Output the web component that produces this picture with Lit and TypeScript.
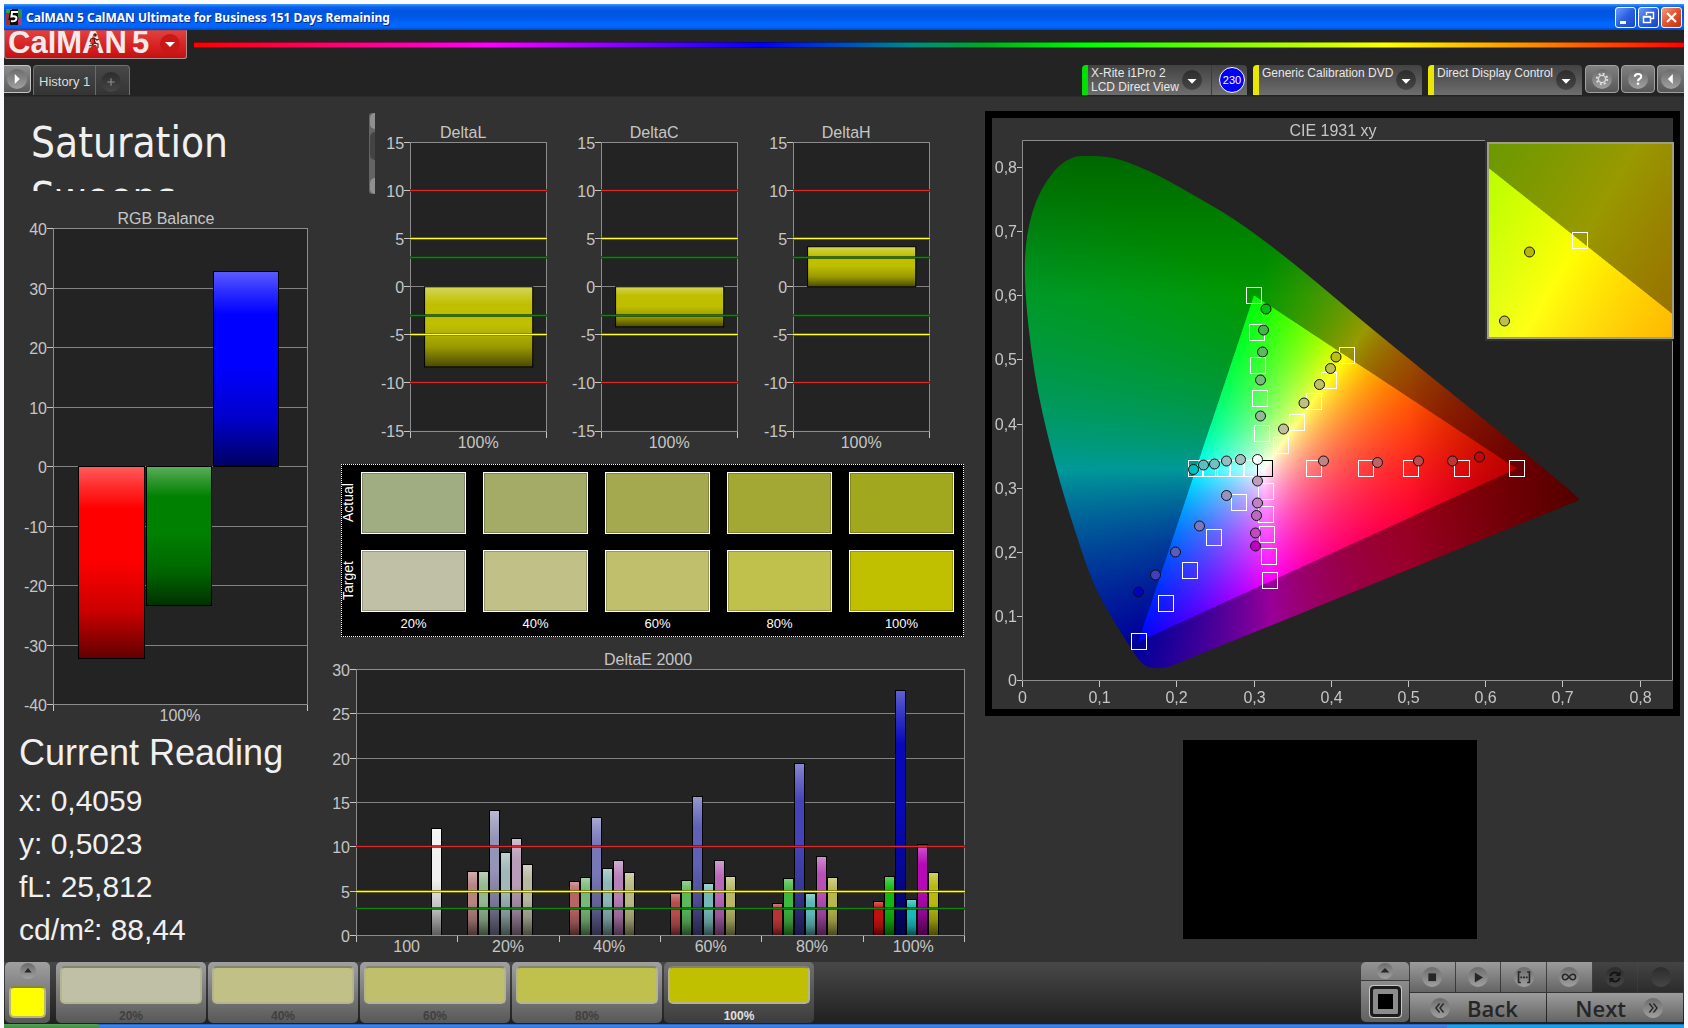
import { LitElement, html, svg, css } from "lit";
import { customElement, property } from "lit/decorators.js";
import { classMap } from "lit/directives/class-map.js";

type Rgb = [number, number, number];
type Point = [number, number];

const mix = (a: Rgb, b: Rgb, t: number): string =>
  `rgb(${a.map((v, i) => Math.round(v + (b[i] - v) * t)).join(",")})`;
const hex = (h: string): Rgb =>
  [1, 3, 5].map((i) => parseInt(h.slice(i, i + 2), 16)) as Rgb;

interface Bar {
  x: number;
  w: number;
  value: number;
  color: string;
}

interface ChartSpec {
  title: string;
  width: number;
  height: number;
  titleX: number;
  plot: { x: number; y: number; w: number; h: number };
  min: number;
  max: number;
  step: number;
  grid: number[];
  limits?: boolean;
  signedLimits?: boolean;
  categories: string[];
  bars: Bar[];
}

@customElement("bar-chart")
class BarChart extends LitElement {
  @property({ attribute: false }) spec!: ChartSpec;

  static styles = css`
    :host { display: block; min-width: 0; }
    svg { display: block; width: 100%; height: auto; overflow: visible; }
    text { font: 16px "Liberation Sans", Arial, sans-serif; fill: #c6c6c6; }
    .end { text-anchor: end; }
    .mid { text-anchor: middle; }
    .plot { fill: #232323; }
    .frame { fill: none; stroke: #8c8c8c; stroke-width: 1; shape-rendering: crispEdges; }
    .grid { stroke: #828282; stroke-width: 1; shape-rendering: crispEdges; }
    .tick { stroke: #c6c6c6; stroke-width: 1; shape-rendering: crispEdges; }
    .bar { stroke: #000; stroke-width: 1; }
    .halo { stroke-width: 3; stroke-opacity: 0.75; }
    .line { stroke-width: 1; }
    .halo, .line { shape-rendering: crispEdges; }
  `;

  render() {
    const s = this.spec;
    const { x, y, w, h } = s.plot;
    const toY = (v: number) => Math.round(y + ((s.max - v) / (s.max - s.min)) * h) + 0.5;
    const ticks: number[] = [];
    for (let v = s.min; v <= s.max; v += s.step) ticks.push(v);
    const colors = [...new Set(s.bars.map((b) => b.color))];
    const catW = w / s.categories.length;
    const limits: [number, string, string][] = s.limits
      ? [[10, "#e02828", "#701212"], [5, "#ffff20", "#7c7c00"], [3, "#148014", "#0c4a0c"]]
      : [];
    const allLimits = limits.flatMap(([v, c, d]) =>
      s.signedLimits ? [[v, c, d], [-v, c, d]] : [[v, c, d]]) as [number, string, string][];
    return html`<svg viewBox="0 0 ${s.width} ${s.height}" role="img" aria-label=${s.title}>
      <defs>
        ${colors.map((c, i) => svg`<linearGradient id="g${i}" x1="0" y1="0" x2="0" y2="1">
          <stop offset="0" stop-color=${mix(hex(c), [255, 255, 255], 0.36)}></stop>
          <stop offset="0.1" stop-color=${mix(hex(c), [255, 255, 255], 0.18)}></stop>
          <stop offset="0.22" stop-color=${c}></stop>
          <stop offset="0.48" stop-color=${c}></stop>
          <stop offset="0.75" stop-color=${mix(hex(c), [0, 0, 0], 0.2)}></stop>
          <stop offset="1" stop-color=${mix(hex(c), [0, 0, 0], 0.62)}></stop>
        </linearGradient>`)}
      </defs>
      <text class="mid" x=${s.titleX} y=${y - 4}>${s.title}</text>
      <rect class="plot" x=${x} y=${y} width=${w} height=${h}></rect>
      ${s.grid.map((v) => svg`<line class="grid" x1=${x} x2=${x + w} y1=${toY(v)} y2=${toY(v)}></line>`)}
      ${s.bars.map((b) => {
        const top = toY(Math.max(b.value, 0));
        const bottom = toY(Math.min(b.value, 0));
        return svg`<rect class="bar" x=${x + b.x + 0.5} y=${top} width=${b.w - 1} height=${bottom - top}
          fill="url(#g${colors.indexOf(b.color)})"></rect>`;
      })}
      <rect class="frame" x=${x + 0.5} y=${toY(s.max)} width=${w} height=${toY(s.min) - toY(s.max)}></rect>
      ${allLimits.map(([v, c, d]) => svg`
        <line class="halo" x1=${x} x2=${x + w + 1} y1=${toY(v)} y2=${toY(v)} stroke=${d}></line>
        <line class="line" x1=${x} x2=${x + w + 1} y1=${toY(v)} y2=${toY(v)} stroke=${c}></line>`)}
      ${ticks.map((v) => svg`
        <line class="tick" x1=${x - 6} x2=${x} y1=${toY(v)} y2=${toY(v)}></line>
        <text class="end" x=${x - 6} y=${toY(v) + 6}>${v}</text>`)}
      ${[...s.categories, ""].map((_, i) => svg`<line class="tick"
        x1=${Math.round(x + catW * i) + 0.5} x2=${Math.round(x + catW * i) + 0.5}
        y1=${y + h + 1} y2=${y + h + 7}></line>`)}
      ${s.categories.map((c, i) => svg`<text class="mid" x=${x + catW * (i + 0.5)} y=${y + h + 17}>${c}</text>`)}
    </svg>`;
  }
}

const RGB_BALANCE: ChartSpec = {
  title: "RGB Balance", width: 333, height: 530, titleX: 162,
  plot: { x: 49, y: 28, w: 254, h: 476 },
  min: -40, max: 40, step: 10, grid: [-30, -20, -10, 0, 10, 20, 30],
  categories: ["100%"],
  bars: [
    { x: 25, w: 67, value: -32.3, color: "#ff0000" },
    { x: 93, w: 66, value: -23.3, color: "#008000" },
    { x: 160, w: 66, value: 32.8, color: "#0000ff" },
  ],
};

const delta = (title: string, value: number): ChartSpec => ({
  title, width: 191, height: 345, titleX: 88,
  plot: { x: 35, y: 30, w: 136, h: 288 },
  min: -15, max: 15, step: 5, grid: [0], limits: true, signedLimits: true,
  categories: ["100%"],
  bars: [{ x: 14, w: 109, value, color: "#bfbf00" }],
});

const SERIES: { at: number; values: number[]; colors: string[] }[] = [
  { at: 75, values: [12.1], colors: ["#f0f0f0"] },
  { at: 111, values: [7.2, 7.2, 14.1, 9.4, 10.9, 8], colors: ["#b88482", "#94b892", "#9494b8", "#a0b8b8", "#b89cb8", "#b8b8a0"] },
  { at: 213, values: [6.1, 6.5, 13.3, 7.6, 8.5, 7.1], colors: ["#b86464", "#78b878", "#7878b8", "#8cb8b8", "#b880b8", "#b8b880"] },
  { at: 314, values: [4.7, 6.2, 15.7, 5.9, 8.5, 6.7], colors: ["#b84c4c", "#5cb85c", "#6060b8", "#74b8b8", "#b868b8", "#b8b868"] },
  { at: 416, values: [3.6, 6.4, 19.4, 4.7, 8.9, 6.5], colors: ["#b83434", "#40b840", "#4444b8", "#5cb8b8", "#b850b8", "#b8b850"] },
  { at: 517, values: [3.8, 6.7, 27.6, 4.1, 10.3, 7.1], colors: ["#c01010", "#10b810", "#0808b8", "#18b8b8", "#b808b8", "#b8b810"] },
];

const DELTA_E: ChartSpec = {
  title: "DeltaE 2000", width: 641, height: 322, titleX: 311,
  plot: { x: 19, y: 29, w: 608, h: 266 },
  min: 0, max: 30, step: 5, grid: [5, 10, 15, 20, 25], limits: true,
  categories: ["100", "20%", "40%", "60%", "80%", "100%"],
  bars: SERIES.flatMap((g) =>
    g.values.map((value, i) => ({ x: g.at + i * 11, w: 11, value, color: g.colors[i] }))),
};

// Chart space: the CIE panel's drawing units, with the xy origin at (1022.4, 680.3).
const VIEW = { x: 985, y: 111, w: 695, h: 605 };
const ORIGIN = { x: 1022.4, y: 680.3 };
const SCALE = { x: 772, y: 641.6 };
const INSET = { x: 1488, y: 143, w: 185, h: 195, scale: 3860, markX: 1580, markY: 240.5 };

const LOCUS: Point[] = [
  [1088, 156], [1099, 156], [1115, 158], [1133, 164], [1160, 176], [1197, 197], [1233, 218], [1273, 247],
  [1314, 280], [1360, 319], [1420, 368], [1480, 416], [1530, 457], [1567, 488], [1578, 498], [1580, 500],
  [1577, 501], [1520, 524], [1400, 573], [1280, 622], [1178, 663], [1172, 666], [1161, 668.5], [1149, 668], [1140, 662],
  [1131, 648], [1111, 617], [1092, 582], [1074, 528], [1060, 483], [1047, 433], [1038, 393], [1031, 350],
  [1026, 303], [1024.5, 270], [1025.5, 246], [1029, 224], [1036, 200], [1047, 180], [1060, 164], [1075, 156],
];

const TARGETS: Point[] = [
  [1254, 295], [1257, 332], [1258, 365], [1260, 398], [1262, 433],
  [1347, 355], [1329, 380], [1314, 401], [1297, 422], [1281, 445],
  [1314, 468], [1366, 468], [1411, 468], [1462, 468], [1517, 468],
  [1196, 468], [1210, 468], [1223, 468], [1237, 468], [1251, 468],
  [1266, 491], [1266, 514], [1267, 534], [1269, 556], [1270, 580],
  [1239, 502], [1214, 537], [1190, 570], [1166, 603], [1139, 641],
];

const READINGS: [number, number, string][] = [
  [1266, 309, "#00c010"], [1263.5, 330, "#40b848"], [1262.5, 352, "#5cb860"], [1260.5, 380, "#78b87c"], [1260.5, 416, "#94b896"],
  [1336, 357, "#bfbf10"], [1330.5, 368.5, "#bfbf4c"], [1319.5, 384.5, "#bfbf68"], [1304, 403, "#bfbf84"], [1283.5, 429, "#bfbf9c"],
  [1323.5, 461, "#bf8484"], [1377.5, 462.5, "#bf6464"], [1418.5, 461, "#bf4c4c"], [1452.5, 461, "#bf3434"], [1479.5, 457, "#bf0808"],
  [1193.5, 469.5, "#00bfbf"], [1203.5, 465, "#5cbfbf"], [1214.5, 464, "#74bfbf"], [1226.5, 461, "#90bfbf"], [1240.5, 459.5, "#a4bfbf"],
  [1257.5, 481, "#bf9cbf"], [1257.5, 503, "#bf84bf"], [1256.5, 515.5, "#bf68bf"], [1255.5, 533, "#bf4cbf"], [1255.5, 546, "#bf00bf"],
  [1226.5, 495.5, "#9494bf"], [1199.5, 526, "#7878bf"], [1175.5, 552, "#5c5cbf"], [1155.5, 575, "#4040bf"], [1138.5, 592, "#0000bf"],
  [1257.5, 459.5, "#ffffff"],
];

function chromaticity(x: number, y: number): Rgb {
  const yy = Math.max(y, 0.0005);
  const X = x / yy;
  const Z = (1 - x - yy) / yy;
  const r = 3.2406 * X - 1.5372 - 0.4986 * Z;
  const g = -0.9689 * X + 1.8758 + 0.0415 * Z;
  const b = 0.0557 * X - 0.204 + 1.057 * Z;
  const outside = Math.min(r, g, b) < 0;
  const c = [r, g, b].map((v) => Math.max(v, 0));
  const top = Math.max(...c);
  const falloff = 1 - Math.max(0, x - 0.5) * 2.1 - Math.max(0, y - 0.6) * 1.5;
  const k = (outside ? 0.6 : 1) * falloff;
  return c.map((v) => (v / top) * 255 * k) as Rgb;
}

function paint(w: number, h: number, toXy: (px: number, py: number) => Point): HTMLCanvasElement {
  const canvas = document.createElement("canvas");
  canvas.width = w * 2;
  canvas.height = h * 2;
  const ctx = canvas.getContext("2d")!;
  const image = ctx.createImageData(canvas.width, canvas.height);
  for (let j = 0, o = 0; j < canvas.height; j++) {
    for (let i = 0; i < canvas.width; i++, o += 4) {
      const [x, y] = toXy((i + 0.5) / 2, (j + 0.5) / 2);
      const [r, g, b] = chromaticity(x, y);
      image.data[o] = r;
      image.data[o + 1] = g;
      image.data[o + 2] = b;
      image.data[o + 3] = 255;
    }
  }
  ctx.putImageData(image, 0, 0);
  return canvas;
}

@customElement("cie-chart")
class CieChart extends LitElement {
  static styles = css`
    :host { display: block; position: relative; background: #323232; }
    canvas, svg { display: block; width: 100%; height: auto; }
    svg { position: absolute; inset: 0; }
    text { font: 16px "Liberation Sans", Arial, sans-serif; fill: #c6c6c6; }
    .end { text-anchor: end; }
    .mid { text-anchor: middle; }
    .border { fill: none; stroke: #000; stroke-width: 7; }
    .frame { fill: none; stroke: #8c8c8c; stroke-width: 1; }
    .inset { fill: none; stroke: #a0a080; stroke-width: 2; }
    .tick { stroke: #c6c6c6; stroke-width: 1; shape-rendering: crispEdges; }
    .target { fill: none; stroke: #fff; stroke-width: 1; }
    .white { stroke: #000; }
    .reading { stroke: #101010; stroke-width: 1; }
  `;

  firstUpdated() {
    const canvas = this.renderRoot.querySelector("canvas")!;
    const ctx = canvas.getContext("2d")!;
    ctx.translate(-VIEW.x, -VIEW.y);
    ctx.fillStyle = "#232323";
    ctx.fillRect(1023, 141, 650, 539);
    ctx.save();
    ctx.beginPath();
    const n = LOCUS.length;
    const mid = (a: Point, b: Point): Point => [(a[0] + b[0]) / 2, (a[1] + b[1]) / 2];
    ctx.moveTo(...mid(LOCUS[n - 1], LOCUS[0]));
    LOCUS.forEach((p, i) => ctx.quadraticCurveTo(...p, ...mid(p, LOCUS[(i + 1) % n])));
    ctx.clip();
    const field = paint(560, 516, (px, py) => [
      (1022 + px - ORIGIN.x) / SCALE.x,
      (ORIGIN.y - 154 - py) / SCALE.y,
    ]);
    ctx.drawImage(field, 1022, 154, 560, 516);
    ctx.restore();
    ctx.fillStyle = "#323232";
    ctx.fillRect(1485, 139, 191, 202);
    const zoom = paint(INSET.w, INSET.h, (px, py) => [
      0.4193 + (INSET.x + px - INSET.markX) / INSET.scale,
      0.5053 - (INSET.y + py - INSET.markY) / INSET.scale,
    ]);
    ctx.drawImage(zoom, INSET.x, INSET.y, INSET.w, INSET.h);
  }

  render() {
    const steps = [0, 1, 2, 3, 4, 5, 6, 7, 8];
    const label = (i: number) => (i === 0 ? "0" : `0,${i}`);
    return html`<canvas width=${VIEW.w} height=${VIEW.h}></canvas>
      <svg viewBox="${VIEW.x} ${VIEW.y} ${VIEW.w} ${VIEW.h}" role="img" aria-label="CIE 1931 xy">
        <rect class="border" x="988.5" y="114.5" width="688" height="598"></rect>
        <text class="mid" x="1333" y="136">CIE 1931 xy</text>
        <path class="frame" d="M1485 140.5H1022.5V680.5H1672.5V341"></path>
        <rect class="inset" x="1488" y="143" width="185" height="195"></rect>
        ${steps.map((i) => {
          const x = Math.floor(ORIGIN.x + i * 0.1 * SCALE.x) + 0.5;
          const y = Math.round(ORIGIN.y - i * 0.1 * SCALE.y) + 0.5;
          return svg`<line class="tick" x1=${x} x2=${x} y1="681" y2="687"></line>
            <line class="tick" x1="1017" x2="1022" y1=${y} y2=${y}></line>
            <text class="mid" x=${x} y="703">${label(i)}</text>
            <text class="end" x="1017" y=${y + 5}>${label(i)}</text>`;
        })}
        ${TARGETS.map(([x, y]) => svg`<rect class="target" x=${x - 7.5} y=${y - 7.5} width="15" height="16"></rect>`)}
        <rect class="target white" x="1257.5" y="460.5" width="15" height="16"></rect>
        ${READINGS.map(([x, y, c]) => svg`<circle class="reading" cx=${x} cy=${y} r="5" fill=${c}></circle>`)}
        <rect class="target" x="1572.5" y="232.5" width="15" height="16"></rect>
        <circle class="reading" cx="1529.5" cy="252" r="5" fill="#b8b800"></circle>
        <circle class="reading" cx="1504.5" cy="321" r="5" fill="#bfbf4c"></circle>
      </svg>`;
  }
}

const LEVELS = ["20%", "40%", "60%", "80%", "100%"];
const ACTUAL = ["#a0ac82", "#a4ab66", "#a4a84e", "#a3a834", "#a2a81e"];
const TARGET = ["#c0c0a6", "#c0c087", "#c0c06c", "#c0c04c", "#c0c000"];

const disc = (glyph: unknown, dark = false) => svg`<svg class="disc" viewBox="0 0 22 22" aria-hidden="true">
  <defs><linearGradient id=${dark ? "disc-dark" : "disc-light"} x1="0" y1="0" x2="0" y2="1">
    <stop offset="0" stop-color=${dark ? "#2c2c2c" : "#6c6c6c"}></stop>
    <stop offset="1" stop-color=${dark ? "#464646" : "#a0a0a0"}></stop>
  </linearGradient></defs>
  <circle cx="11" cy="11" r="11" fill=${dark ? "url(#disc-dark)" : "url(#disc-light)"}></circle>${glyph}</svg>`;

const DOWN = svg`<path d="M6 10h10l-5 5z" fill="#fff"></path>`;
const TOOLS: [string, unknown, boolean][] = [
  ["Stop", svg`<rect x="7" y="7" width="8.500" height="8.500" fill="#262626"></rect>`, false],
  ["Play", svg`<path d="M7.500 6l9 5.500-9 5.500z" fill="#262626"></path>`, false],
  ["Read series", svg`<path d="M7.500 5.500H5v11.500h2.500M14.500 5.500H17v11.500h-2.500" fill="none" stroke="#262626" stroke-width="1.800"></path><path d="M7 10.500h2v2H7zM10 10.500h2v2h-2zM13 10.500h2v2h-2z" fill="#262626"></path>`, false],
  ["Read continuous", svg`<path d="M11 11C9.500 9 8.500 8 6.800 8a3 3 0 0 0 0 6C8.500 14 9.500 13 11 11s2.500-3 4.200-3a3 3 0 0 1 0 6c-1.700 0-2.700-1-4.200-3z" fill="none" stroke="#262626" stroke-width="1.700"></path>`, false],
  ["Refresh", svg`<path d="M6 10a5 5 0 0 1 8.500-2.500M16 12a5 5 0 0 1-8.500 2.500" fill="none" stroke="#141414" stroke-width="2.200"></path><path d="M17 4.500v5.500h-5.500zM5 17.500v-5.500h5.500z" fill="#141414"></path>`, true],
  ["Record", svg``, true],
];

@customElement("app-root")
class AppRoot extends LitElement {
  static styles = css`
    :host { display: block; min-height: 100vh; background: #fbfbff; box-sizing: border-box; padding: 4px 4px 0;
      font: 12px "Liberation Sans", Arial, sans-serif; color: #e8e8e8; overflow: hidden; }
    * { box-sizing: border-box; }
    button { font: inherit; color: inherit; border: 0; margin: 0; padding: 0; background: none; display: flex; align-items: center; }
    h1, h2, p { margin: 0; font-weight: normal; }
    .disc { width: 20px; height: 20px; display: block; flex: none; }

    .titlebar { display: flex; align-items: center; height: 26px; padding: 0 2px; gap: 4px;
      background: linear-gradient(#3f96ff 0, #0a62ee 3px, #0055e0 7px, #0058e8 14px, #0066ff 19px, #0066fb 23px, #0046c8 26px); }
    .appicon { width: 16px; height: 16px; }
    .caption { font: bold 12px "Noto Sans", "Open Sans", sans-serif; color: #fff; text-shadow: 1px 1px 0 #0a2a88; flex: 1; }
    .winbtns { display: flex; gap: 2px; }
    .winbtn { width: 21px; height: 21px; border: 1px solid #fff; border-radius: 3px; justify-content: center;
      background: linear-gradient(135deg, #6d9cf8, #2a5fe0 50%, #1c48c0); }
    .winbtn.close { background: linear-gradient(135deg, #f0a080, #e0502c 50%, #c03414); }
    .winbtn svg { width: 17px; height: 17px; }

    .brand { display: flex; align-items: flex-start; background: #232323; gap: 7px; height: 35px; }
    .logo { width: 183px; height: 29px; background: linear-gradient(#e04040, #d82424 50%, #c41010);
      border: 1px solid #a89090; border-top: 1px solid #b84040; border-radius: 0 0 3px 3px; }
    .logo svg { width: 181px; height: 27px; display: block; }
    .mark { font: bold 31px "Liberation Sans", Arial, sans-serif; fill: #f0eaea; }
    .rainbow { flex: 1; height: 6px; margin-top: 12px; border-top: 1px solid #0006; border-bottom: 1px solid #0006;
      background: linear-gradient(90deg, #f00, #f0a 14%, #f0f 20%, #50f 32%, #00f 38%, #088 48%, #0a2 53%, #0f0 60%, #8f0 70%, #ff0 80%, #f80 90%, #f00); }

    .tabs { display: flex; align-items: flex-start; background: #232323; height: 31px; }
    .toggle { width: 27px; height: 28px; border: 1px solid #c4c4c4; border-left: 0; border-radius: 0 4px 4px 0;
      background: linear-gradient(#8c8c8c, #5c5c5c); padding-left: 3px; margin-right: 2px; }
    .history { display: flex; height: 30px; border: 1px solid #707070; border-bottom: 0; border-radius: 4px 4px 0 0;
      background: linear-gradient(#484848, #343434); font-size: 13px; color: #dcdcdc; }
    .history button { padding: 2px 5px 0; }
    .history .add { border-left: 1px solid #6c6c6c; width: 34px; }
    .spacer { flex: 1; }
    .device { display: flex; height: 30px; border-radius: 4px 4px 0 0; background: linear-gradient(#424242, #6e6e6e);
      border-left: 6px solid #00e000; margin-right: 6px; }
    .device.yellow { border-left-color: #e8e800; }
    .device .pick { align-items: center; padding: 0 6px 0 3px; text-align: left; line-height: 14px; justify-content: space-between; }
    .device .names { align-self: flex-start; padding-top: 1px; white-space: nowrap; }
    .meter { width: 165px; } .meter .pick { width: 124px; border-right: 1px solid #3c3c3c; padding-right: 9px; }
    .source { width: 169px; } .source .pick { width: 100%; }
    .display { width: 154px; margin-right: 3px; } .display .pick { width: 100%; }
    .count { width: 26px; height: 26px; margin: 2px 0 0 7px; border: 1px solid #fff; border-radius: 50%; background: #0000f8; color: #fff;
      line-height: 24px; text-align: center; font-size: 11px; }
    .square { width: 34px; height: 28px; border: 1px solid #a0a0a0; border-radius: 4px; margin-right: 2px; justify-content: center;
      background: linear-gradient(#808080, #585858); }
    .square.last { width: 27px; margin-right: 0; border-right: 0; border-radius: 4px 0 0 4px; justify-content: flex-start; padding-left: 3px; }

    .work { display: grid; grid-template-columns: 333fr 641fr 706fr; align-items: start; background: #323232; min-height: 866px;
      border-top: 1px solid #2b2b2b; }
    .title { font: 42px/55px "DejaVu Sans Condensed", "DejaVu Sans", sans-serif; color: #f0f0f0; padding: 18px 28px 0 27px; height: 94px;
      overflow: hidden; margin-bottom: 9px; }
    .reading { padding: 1px 0 0 15px; color: #f0f0f0; }
    .reading h2 { font-size: 36px; line-height: 44px; margin-bottom: 4px; }
    .reading p { font-size: 30px; line-height: 43px; }
    .deltas { display: flex; align-items: flex-start; padding: 15px 29px 0 32px; }
    .deltas bar-chart { flex: 1; }
    .scroll { width: 6px; height: 81px; margin-top: 1px; background: #646464; border-radius: 3px 0 0 3px; padding-left: 1px;
      display: flex; flex-direction: column; justify-content: space-between; }
    .scroll span { background: #909090; height: 16px; border-radius: 6px 0 0 6px; }
    .scroll .thumb { background: #444; height: 28px; margin-bottom: 16px; }
    .swatches { display: flex; background: #000; border: 1px dotted #fff; margin: 6px 14px 3px 4px; padding: 7px 9px 0 0;
      height: 173px; font-size: 13px; color: #fff; }
    .axes { width: 19px; display: grid; grid-template-rows: 62px 62px; row-gap: 16px; font-size: 14px; }
    .axes span { writing-mode: vertical-rl; transform: rotate(180deg); text-align: center; line-height: 12px; justify-self: start; }
    .cells { flex: 1; display: grid; grid-template-columns: repeat(5, 1fr); grid-template-rows: 62px 62px 14px; gap: 16px 17px; }
    .cell { border: 1px solid #fff; box-shadow: inset 0 0 0 1px #0003; }
    .level { text-align: center; line-height: 14px; margin-top: -11px; }
    .right { padding: 14px 4px 0 7px; }
    .preview { width: 294px; max-width: 100%; height: 199px; margin: 24px 0 0 198px; background: #000; }

    .dock { display: flex; align-items: flex-start; height: 62px; padding-left: 1px; background: linear-gradient(#484848, #202020); }
    .dock .panel { border-radius: 5px; background: linear-gradient(#a0a0a0, #585858); }
    .current { width: 45px; height: 61px; margin-right: 6px; flex-direction: column; display: flex; padding: 1px 4px; gap: 7px; }
    .current .disc { width: 16px; height: 16px; }
    .chip { display: block; width: 37px; height: 32px; border: 2px solid #b8b870; border-top-color: #868640; border-radius: 5px; background: #ff0; }
    .pattern { width: 150px; height: 61px; margin-right: 2px; flex-direction: column; padding: 4px 4px 0; gap: 5px;
      font-weight: bold; color: #404040; }
    .pattern .fill { display: block; width: 100%; height: 38px; border: 2px solid #b4b490; border-top-color: #85856a; border-radius: 5px; }
    .dock .pattern.active { background: linear-gradient(#707070, #3c3c3c); color: #e0e0e0; }
    .device-stack { width: 48px; display: grid; grid-template-rows: 18px 41px; gap: 1px; margin-right: 1px; }
    .device-stack button { justify-content: center; background: linear-gradient(#949494, #7c7c7c); border-radius: 5px 5px 0 0; }
    .device-stack button + button { border-radius: 0 0 5px 5px; background: linear-gradient(#8c8c8c, #606060); }
    .device-stack .disc { width: 16px; height: 16px; }
    .device-stack .window { width: 33px; height: 33px; }
    .controls { width: 273px; display: grid; grid-template-columns: repeat(6, 1fr); grid-template-rows: 30px 29px; gap: 1px; margin-right: 1px; }
    .controls button { justify-content: center; background: linear-gradient(#9c9c9c, #646464); }
    .controls button.off { background: linear-gradient(#444, #2c2c2c); }
    .controls .nav { grid-column: span 3; font: 22px "Open Sans", "Noto Sans", sans-serif; font-weight: 600; color: #262626; gap: 17px; }
    .controls .back { justify-content: flex-start; padding-left: 20px; }
    .controls .next { justify-content: flex-end; padding-right: 20px; }
    .taskbar { display: flex; height: 4px; background: linear-gradient(#1848a0, #3c88f0 1px, #2f78e0); }
    .start { width: 96px; background: linear-gradient(#58a058, #3c9040); border-radius: 0 4px 0 0; }
    .tray { width: 237px; margin-left: auto; background: linear-gradient(#0c5090, #18a0f0 1px); }
  `;

  render() {
    return html`
      <header>
        <div class="titlebar">
          <svg class="appicon" viewBox="0 0 16 16" aria-hidden="true"><rect width="16" height="16" fill="#111"></rect>
            <path d="M0 0h4v16H0z" fill="#a03030"></path><path d="M12 0h4v8h-4z" fill="#309040"></path><path d="M12 8h4v8h-4z" fill="#a04080"></path><path d="M0 0h6v4H0z" fill="#30a050"></path>
            <path d="M12 3H6L5 8q5-2 5.500 1.500Q10 13 5 12" fill="none" stroke="#000" stroke-width="4"></path>
            <path d="M12 3H6L5.500 7.500q5-1 5 2Q10 13 5 12" fill="none" stroke="#fff" stroke-width="2"></path></svg>
          <div class="caption">CalMAN 5 CalMAN Ultimate for Business 151 Days Remaining</div>
          <div class="winbtns">
            <button class="winbtn" aria-label="Minimize"><svg viewBox="0 0 17 17"><path d="M3 12h6v3H3z" fill="#fff"></path></svg></button>
            <button class="winbtn" aria-label="Restore"><svg viewBox="0 0 17 17"><path d="M6.500 6V3.500h7v6H11M6 3.500h8M3.500 7.500h7v6h-7zM3 8h8" fill="none" stroke="#fff" stroke-width="1.500"></path></svg></button>
            <button class="winbtn close" aria-label="Close"><svg viewBox="0 0 17 17"><path d="M4 4l9 9M13 4l-9 9" stroke="#fff" stroke-width="2.200"></path></svg></button>
          </div>
        </div>
        <div class="brand">
          <button class="logo" aria-label="CalMAN 5 menu"><svg viewBox="0 0 181 27">
            <text class="mark" x="3" y="22">CalMAN</text><text class="mark" x="127" y="22">5</text>
            <path d="M85 18l2-4h4l2 4z" fill="#cc2020"></path>
            <circle cx="90" cy="4" r="1.800" fill="#701010"></circle>
            <path d="M89 7l-3 1-1 3M89 7l1 5-3 2-3 1M90 12l3 1v4M89 7l3 2 2-1" fill="none" stroke="#701010" stroke-width="1.200"></path>
            <circle cx="165" cy="13" r="10" fill="#c81818"></circle><path d="M160 11h10l-5 5z" fill="#fff"></path>
          </svg></button>
          <div class="rainbow"></div>
        </div>
        <nav class="tabs">
          <button class="toggle" aria-label="Expand">${disc(svg`<path d="M8.500 5.500l5.500 5.500-5.500 5.500z" fill="#fff"></path>`)}</button>
          <div class="history"><button>History 1</button>
            <button class="add" aria-label="Add tab">${disc(svg`<path d="M11 7v8M7 11h8" stroke="#909090" stroke-width="1.200"></path>`, true)}</button></div>
          <span class="spacer"></span>
          <div class="device meter"><button class="pick"><span class="names">X-Rite i1Pro 2<br>LCD Direct View</span>${disc(DOWN, true)}</button>
            <span class="count">230</span></div>
          <div class="device yellow source"><button class="pick"><span class="names">Generic Calibration DVD</span>${disc(DOWN, true)}</button></div>
          <div class="device yellow display"><button class="pick"><span class="names">Direct Display Control</span>${disc(DOWN, true)}</button></div>
          <button class="square" aria-label="Settings">${disc(svg`<circle cx="11" cy="11" r="4" fill="none" stroke="#ddd" stroke-width="1.500"></circle>
            <circle cx="11" cy="11" r="5.800" fill="none" stroke="#ddd" stroke-width="2" stroke-dasharray="2.200 2.355"></circle>`)}</button>
          <button class="square" aria-label="Help">${disc(svg`<path d="M7.500 8.500q0-3 3.500-3t3.500 2.700q0 1.700-1.700 2.500T11 13.500" fill="none" stroke="#fff" stroke-width="2.400"></path><path d="M9.700 15h2.600v2.400H9.700z" fill="#fff"></path>`)}</button>
          <button class="square last" aria-label="Collapse">${disc(svg`<path d="M13 5.500L7.500 11l5.500 5.500z" fill="#fff"></path>`)}</button>
        </nav>
      </header>
      <main class="work">
        <section>
          <h1 class="title">Saturation Sweeps</h1>
          <bar-chart .spec=${RGB_BALANCE}></bar-chart>
          <div class="reading">
            <h2>Current Reading</h2>
            <p>x: 0,4059</p><p>y: 0,5023</p><p>fL: 25,812</p><p>cd/m²: 88,44</p>
          </div>
        </section>
        <section>
          <div class="deltas">
            <div class="scroll"><span></span><span class="thumb"></span><span></span></div>
            <bar-chart .spec=${delta("DeltaL", -8.3)}></bar-chart>
            <bar-chart .spec=${delta("DeltaC", -4.2)}></bar-chart>
            <bar-chart .spec=${delta("DeltaH", 4.2)}></bar-chart>
          </div>
          <div class="swatches">
            <div class="axes"><span>Actual</span><span>Target</span></div>
            <div class="cells">
              ${[...ACTUAL, ...TARGET].map((c) => html`<span class="cell" style="background:${c}"></span>`)}
              ${LEVELS.map((l) => html`<span class="level">${l}</span>`)}
            </div>
          </div>
          <bar-chart .spec=${DELTA_E}></bar-chart>
        </section>
        <section class="right">
          <cie-chart></cie-chart>
          <div class="preview"></div>
        </section>
      </main>
      <footer>
        <div class="dock">
          <button class="panel current" aria-label="Current pattern">${disc(svg`<path d="M6 13h10l-5-6z" fill="#262626"></path>`)}<span class="chip"></span></button>
          ${LEVELS.map((l, i) => html`<button class=${classMap({ panel: true, pattern: true, active: i === 4 })}>
            <span class="fill" style="background:${TARGET[i]}"></span>${l}</button>`)}
          <span class="spacer"></span>
          <div class="device-stack">
            <button aria-label="Window options">${disc(svg`<path d="M5 13h12l-6-6z" fill="#262626"></path>`)}</button>
            <button aria-label="Pattern window"><svg class="window" viewBox="0 0 33 33"><rect x=".5" y=".5" width="32" height="32" rx="3" fill="none" stroke="#c8c8c8"></rect>
              <rect x="2.500" y="2.500" width="28" height="28" rx="3" fill="#8c8c8c" stroke="#1c1c1c" stroke-width="3"></rect><rect x="9" y="9" width="15" height="15" fill="#000"></rect></svg></button>
          </div>
          <div class="controls">
            ${TOOLS.map(([name, glyph, off]) => html`<button class=${classMap({ off })} aria-label=${name}>${disc(glyph, off)}</button>`)}
            <button class="nav back">${disc(svg`<path d="M10.500 6l-4 5 4 5M15 6l-4 5 4 5" fill="none" stroke="#262626" stroke-width="1.500"></path>`)}Back</button>
            <button class="nav next">Next${disc(svg`<path d="M7 6l4 5-4 5M11.500 6l4 5-4 5" fill="none" stroke="#262626" stroke-width="1.500"></path>`)}</button>
          </div>
        </div>
        <div class="taskbar"><span class="start"></span><span class="tray"></span></div>
      </footer>`;
  }
}
